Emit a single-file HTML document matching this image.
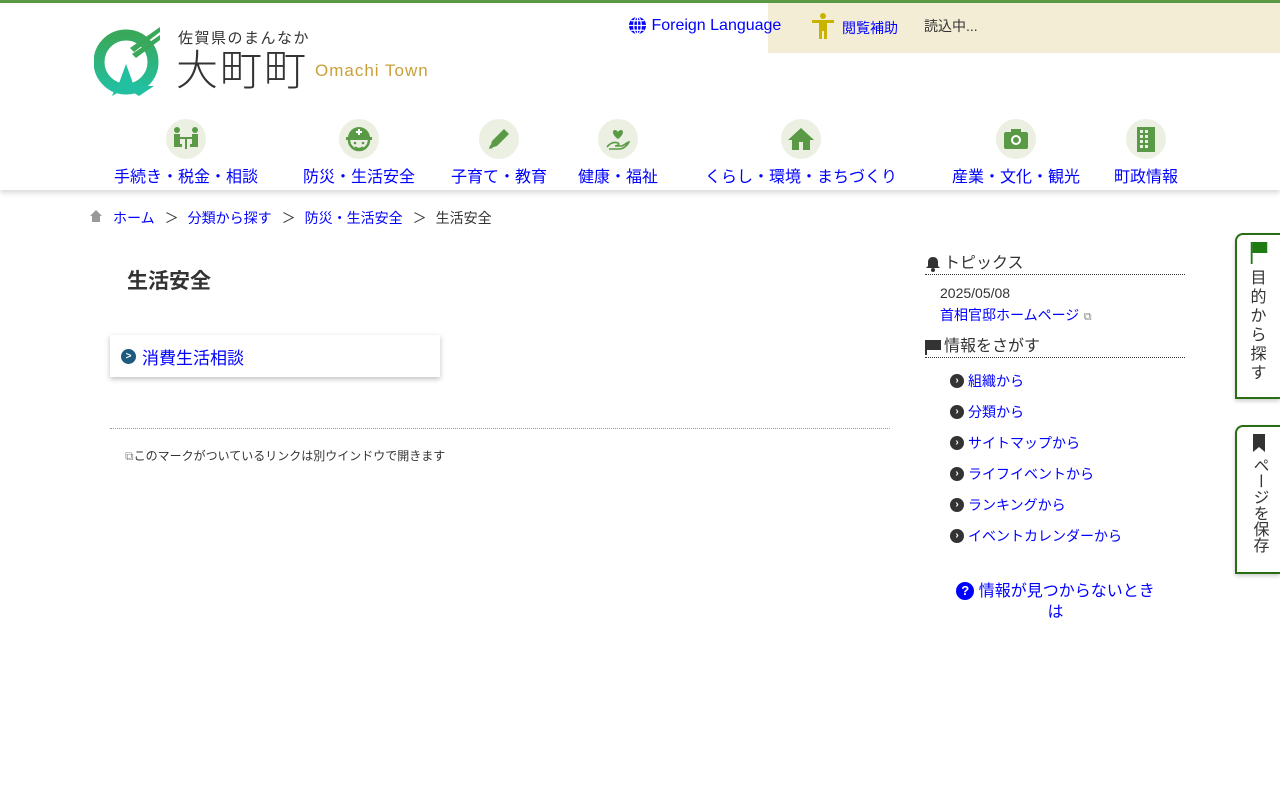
<!DOCTYPE html>
<html><head><meta charset="utf-8"><style>
*{margin:0;padding:0;box-sizing:border-box}
body{width:1280px;height:800px;overflow:hidden;background:#fff;font-family:"Liberation Sans","Noto Sans CJK JP",sans-serif;color:#333;position:relative}
a{color:#00f;text-decoration:none}
.top{position:absolute;top:0;left:0;width:1280px;height:3px;background:#5a9a46}
.hdr{position:absolute;top:3px;left:0;width:1280px;height:187px;box-shadow:0 3px 5px rgba(0,0,0,.15);background:#fff}
.beige{position:absolute;left:768px;top:3px;width:512px;height:50px;background:#f3edd6}
.nav{position:absolute;top:119px;text-align:center;transform:translateX(-50%);white-space:nowrap}
.nav .c{width:40px;height:40px;border-radius:50%;background:#ebf0e2;margin:0 auto 4px;display:flex;align-items:center;justify-content:center}
.nav span{font-size:16px;color:#00f}
.abs{position:absolute}
.tab{position:absolute;left:1235px;width:45px;border:2px solid #2a6d12;border-right:none;border-radius:8px 0 0 0;background:#fff;box-shadow:0 2px 4px rgba(0,0,0,.2);text-align:center;font-size:16px;line-height:19px;padding-top:7px}
.sb a{font-size:14px}
.li{position:absolute;left:950px;font-size:14px;display:flex;align-items:center}
.li i{display:inline-block;width:14px;height:14px;border-radius:50%;background:#333;color:#fff;font-style:normal;font-size:10px;line-height:14px;text-align:center;margin-right:4px;font-weight:bold}
</style></head><body>
<div class="top"></div>
<div class="hdr"></div>
<div class="beige"></div>
<svg class="abs" style="left:94px;top:26px" width="68" height="72" viewBox="0 0 68 72">
<defs><linearGradient id="g" x1="0" y1="0" x2="0" y2="1"><stop offset="0" stop-color="#3aa85a"/><stop offset="1" stop-color="#22c0a0"/></linearGradient></defs>
<circle cx="32" cy="36" r="27" fill="none" stroke="url(#g)" stroke-width="11"/>
<path d="M36 22 L66 1 L66 6 L40 26Z M38 28 L66 9 L66 14 L42 32Z" fill="#3aa85a"/>
<path d="M32 38 L40 60 L60 60 L45 70 L32 62 L18 70 L22 60 L4 60 L24 60Z" fill="#22c0a0"/>
</svg>
<div class="abs" style="left:178px;top:27px;font-size:15px;letter-spacing:1.5px;color:#333">佐賀県のまんなか</div>
<div class="abs" style="left:176px;top:46px;font-size:42px;line-height:50px;font-weight:300;letter-spacing:2px;color:#333">大町町</div>
<div class="abs" style="left:315px;top:61px;font-size:17px;letter-spacing:1px;color:#c9a03a">Omachi Town</div>
<div class="abs" style="left:628px;top:16px;font-size:16px;color:#00f;display:flex;align-items:center"><svg width="19" height="19" viewBox="0 0 20 20"><circle cx="10" cy="10" r="9" fill="#00f"/><path d="M1 10h18M10 1v18M3 5h14M3 15h14" stroke="#fff" stroke-width="1.3"/><ellipse cx="10" cy="10" rx="4" ry="9" fill="none" stroke="#fff" stroke-width="1.3"/></svg>&nbsp;Foreign Language</div>
<svg class="abs" style="left:812px;top:13px" width="22" height="26" viewBox="0 0 22 26"><circle cx="11" cy="3" r="3" fill="#c8b400"/><rect x="0" y="7" width="22" height="3" fill="#c8b400"/><rect x="7" y="9" width="8" height="9" fill="#c8b400"/><rect x="7" y="17" width="3" height="9" fill="#c8b400"/><rect x="12" y="17" width="3" height="9" fill="#c8b400"/></svg>
<div class="abs" style="left:842px;top:18px;font-size:14px;color:#00f">閲覧補助</div>
<div class="abs" style="left:924px;top:16px;font-size:14px;color:#333">読込中...</div>
<div class="nav" style="left:186px"><div class="c"><svg width="28" height="24" viewBox="0 0 28 24" fill="#5a9a46"><circle cx="5" cy="3" r="3"/><circle cx="23" cy="3" r="3"/><rect x="2" y="7" width="6" height="10"/><rect x="20" y="7" width="6" height="10"/><rect x="8" y="10" width="12" height="2"/><rect x="13" y="12" width="2" height="10"/><rect x="2" y="17" width="8" height="3"/><rect x="18" y="17" width="8" height="3"/></svg></div><span>手続き・税金・相談</span></div>
<div class="nav" style="left:359px"><div class="c"><svg width="30" height="30" viewBox="0 0 30 30"><path d="M4 14a11 11 0 0 1 22 0Z" fill="#5a9a46"/><rect x="2" y="13" width="26" height="3" fill="#5a9a46"/><path d="M15 5v6M12 8h6" stroke="#fff" stroke-width="2"/><path d="M5 16a10 10 0 0 0 20 0" fill="none" stroke="#5a9a46" stroke-width="2.5"/><circle cx="11" cy="19" r="1.3" fill="#5a9a46"/><circle cx="19" cy="19" r="1.3" fill="#5a9a46"/><path d="M11 23q4 3 8 0" fill="none" stroke="#5a9a46" stroke-width="1.5"/></svg></div><span>防災・生活安全</span></div>
<div class="nav" style="left:499px"><div class="c"><svg width="26" height="26" viewBox="0 0 26 26"><path d="M4 22l2-7L18 3l5 5L11 20Z" fill="#5a9a46"/><path d="M3 23l1-4 3 3Z" fill="#5a9a46"/></svg></div><span>子育て・教育</span></div>
<div class="nav" style="left:618px"><div class="c"><svg width="28" height="28" viewBox="0 0 28 28"><path d="M14 14c-6-4-6-9-3-9 2 0 3 2 3 2s1-2 3-2c3 0 3 5-3 9Z" fill="#5a9a46"/><path d="M3 22c4-5 8-5 11-4 2 1 0 3-3 3h6c3 0 6-4 8-4-2 4-6 7-10 7H5" fill="none" stroke="#5a9a46" stroke-width="1.6"/></svg></div><span>健康・福祉</span></div>
<div class="nav" style="left:801px"><div class="c"><svg width="28" height="26" viewBox="0 0 28 26" fill="#5a9a46"><path d="M14 2L1 14h4v10h18V14h4Z"/><rect x="12" y="16" width="4" height="8" fill="#ebf0e2"/></svg></div><span>くらし・環境・まちづくり</span></div>
<div class="nav" style="left:1016px"><div class="c"><svg width="28" height="24" viewBox="0 0 28 24"><rect x="2" y="5" width="24" height="17" rx="2" fill="#5a9a46"/><rect x="9" y="2" width="10" height="4" fill="#5a9a46"/><circle cx="14" cy="13" r="5" fill="#fff"/><circle cx="14" cy="13" r="3" fill="#5a9a46"/></svg></div><span>産業・文化・観光</span></div>
<div class="nav" style="left:1146px"><div class="c"><svg width="24" height="28" viewBox="0 0 24 28"><rect x="3" y="2" width="18" height="25" fill="#5a9a46"/><g fill="#ebf0e2"><rect x="6" y="5" width="3" height="3"/><rect x="11" y="5" width="3" height="3"/><rect x="6" y="10" width="3" height="3"/><rect x="11" y="10" width="3" height="3"/><rect x="6" y="15" width="3" height="3"/><rect x="11" y="15" width="3" height="3"/><rect x="6" y="20" width="3" height="3"/><rect x="11" y="20" width="3" height="3"/></g></svg></div><span>町政情報</span></div>
<svg class="abs" style="left:90px;top:210px" width="12" height="12" viewBox="0 0 12 12"><path d="M6 0L0 6h2v6h8V6h2Z" fill="#999"/></svg>
<div class="abs" style="left:113px;top:208px;font-size:14px;white-space:nowrap"><a>ホーム</a><span style="margin:0 9px 0 10px">＞</span><a>分類から探す</a><span style="margin:0 9px 0 10px">＞</span><a>防災・生活安全</a><span style="margin:0 9px 0 10px">＞</span><span>生活安全</span></div>
<h1 class="abs" style="left:127px;top:265px;font-size:21px;font-weight:bold;color:#333">生活安全</h1>
<div class="abs" style="left:110px;top:335px;width:330px;height:42px;box-shadow:0 2px 5px rgba(0,0,0,.25);background:#fff;display:flex;align-items:center;padding-left:11px"><span style="display:inline-block;width:15px;height:15px;border-radius:50%;background:#1e5a80;color:#fff;font-size:10px;line-height:15px;text-align:center;font-weight:bold;margin-right:6px">&gt;</span><a style="font-size:17px">消費生活相談</a></div>
<div class="abs" style="left:110px;top:428px;width:780px;border-top:1px dotted #999"></div>
<div class="abs" style="left:125px;top:447px;font-size:12px;color:#333"><span style="color:#888">⧉</span>このマークがついているリンクは別ウインドウで開きます</div>
<div class="abs" style="left:925px;top:254px;width:260px;border-bottom:1px dotted #333;font-size:16px;line-height:20px;display:flex;align-items:center"><svg width="16" height="16" viewBox="0 0 16 16"><path d="M8 1c-3 0-5 2-5 5v4l-2 2h14l-2-2V6c0-3-2-5-5-5Z" fill="#333"/><circle cx="8" cy="14" r="2" fill="#333"/></svg><span style="margin-left:3px">トピックス</span></div>
<div class="abs" style="left:940px;top:285px;font-size:14px">2025/05/08</div>
<div class="abs sb" style="left:940px;top:305px"><a>首相官邸ホームページ</a> <span style="color:#888;font-size:11px">⧉</span></div>
<div class="abs" style="left:925px;top:337px;width:260px;border-bottom:1px dotted #333;font-size:16px;line-height:20px;display:flex;align-items:center"><svg width="16" height="16" viewBox="0 0 16 16"><rect x="0" y="1" width="2" height="15" fill="#333"/><path d="M2 1h14v10H2Z" fill="#333"/></svg><span style="margin-left:3px">情報をさがす</span></div>
<div class="li" style="top:371px"><i>›</i><a>組織から</a></div>
<div class="li" style="top:402px"><i>›</i><a>分類から</a></div>
<div class="li" style="top:433px"><i>›</i><a>サイトマップから</a></div>
<div class="li" style="top:464px"><i>›</i><a>ライフイベントから</a></div>
<div class="li" style="top:495px"><i>›</i><a>ランキングから</a></div>
<div class="li" style="top:526px"><i>›</i><a>イベントカレンダーから</a></div>
<div class="abs" style="left:953px;top:581px;width:205px;text-align:center;font-size:16px;line-height:21px;color:#00f"><span style="display:inline-block;width:18px;height:18px;border-radius:50%;background:#00f;color:#fff;font-size:13px;line-height:18px;font-weight:bold;vertical-align:1px">?</span> 情報が見つからないときは</div>
<div class="tab" style="top:233px;height:166px"><svg width="20" height="22" viewBox="0 0 20 24"><rect x="1" y="0" width="2" height="24" fill="#1e7a12"/><rect x="3" y="0" width="16" height="12" fill="#1e7a12"/></svg><br>目<br>的<br>か<br>ら<br>探<br>す</div>
<div class="tab" style="top:425px;height:149px"><svg width="14" height="18" viewBox="0 0 14 18"><path d="M1 0h12v18l-6-5-6 5Z" fill="#333"/></svg><br><span style="writing-mode:vertical-rl;line-height:22px">ページを保存</span></div>
</body></html>
